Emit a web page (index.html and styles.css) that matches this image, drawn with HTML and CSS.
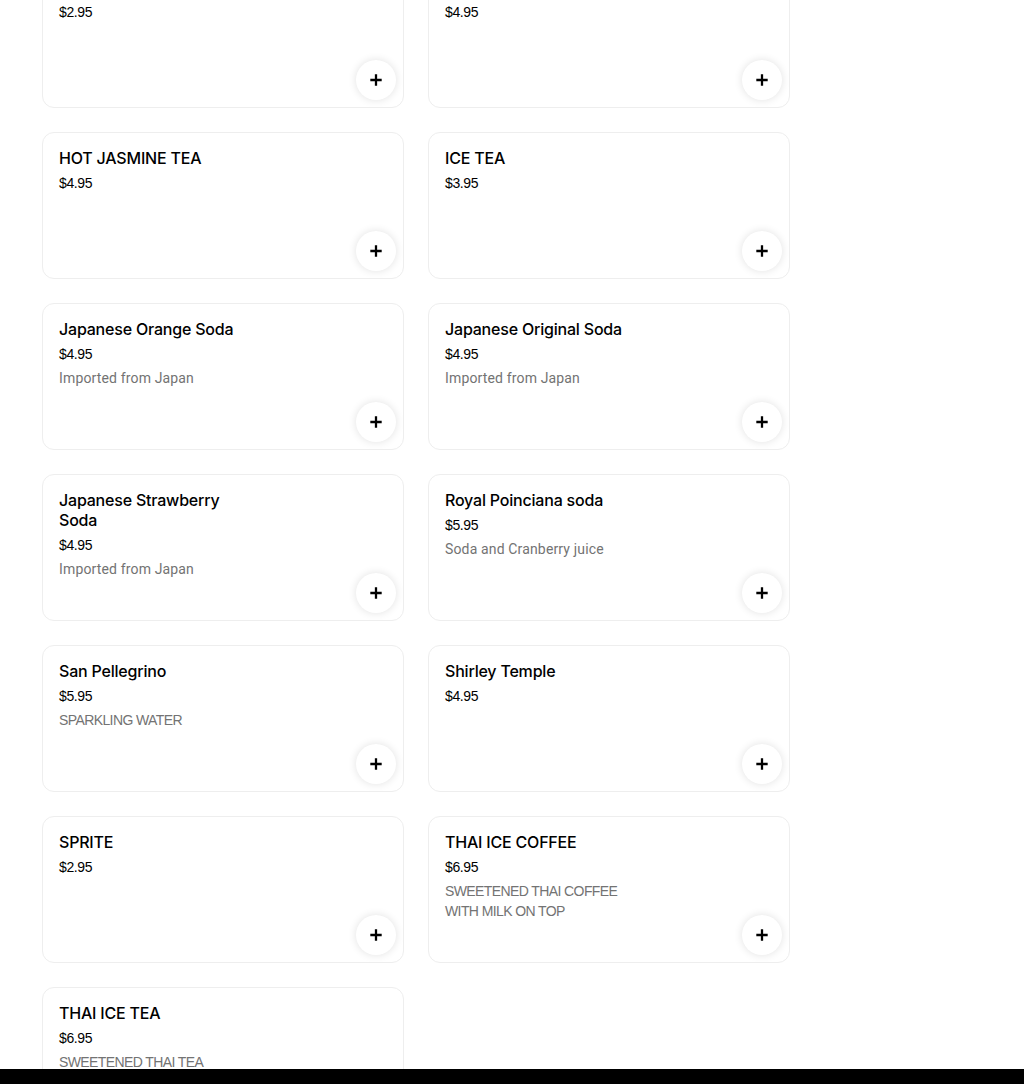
FILE: index.html
```html
<!DOCTYPE html>
<html>
<head>
<meta charset="utf-8">
<link rel="stylesheet" href="styles.css">
</head>
<body>
<main class="menu">
  <div class="grid">
    <div class="card"><div class="info"><div class="title">&nbsp;</div><div class="price">$2.95</div></div><button class="add"><svg viewBox="0 0 16 16" width="14" height="14"><path d="M8 1.5v13M1.5 8h13" stroke="#000" stroke-width="2.6"/></svg></button></div>
    <div class="card"><div class="info"><div class="title">&nbsp;</div><div class="price">$4.95</div></div><button class="add"><svg viewBox="0 0 16 16" width="14" height="14"><path d="M8 1.5v13M1.5 8h13" stroke="#000" stroke-width="2.6"/></svg></button></div>
    <div class="card"><div class="info"><div class="title">HOT JASMINE TEA</div><div class="price">$4.95</div></div><button class="add"><svg viewBox="0 0 16 16" width="14" height="14"><path d="M8 1.5v13M1.5 8h13" stroke="#000" stroke-width="2.6"/></svg></button></div>
    <div class="card"><div class="info"><div class="title">ICE TEA</div><div class="price">$3.95</div></div><button class="add"><svg viewBox="0 0 16 16" width="14" height="14"><path d="M8 1.5v13M1.5 8h13" stroke="#000" stroke-width="2.6"/></svg></button></div>
    <div class="card"><div class="info"><div class="title">Japanese Orange Soda</div><div class="price">$4.95</div><div class="desc">Imported from Japan</div></div><button class="add"><svg viewBox="0 0 16 16" width="14" height="14"><path d="M8 1.5v13M1.5 8h13" stroke="#000" stroke-width="2.6"/></svg></button></div>
    <div class="card"><div class="info"><div class="title">Japanese Original Soda</div><div class="price">$4.95</div><div class="desc">Imported from Japan</div></div><button class="add"><svg viewBox="0 0 16 16" width="14" height="14"><path d="M8 1.5v13M1.5 8h13" stroke="#000" stroke-width="2.6"/></svg></button></div>
    <div class="card"><div class="info"><div class="title">Japanese Strawberry Soda</div><div class="price">$4.95</div><div class="desc">Imported from Japan</div></div><button class="add"><svg viewBox="0 0 16 16" width="14" height="14"><path d="M8 1.5v13M1.5 8h13" stroke="#000" stroke-width="2.6"/></svg></button></div>
    <div class="card"><div class="info"><div class="title">Royal Poinciana soda</div><div class="price">$5.95</div><div class="desc">Soda and Cranberry juice</div></div><button class="add"><svg viewBox="0 0 16 16" width="14" height="14"><path d="M8 1.5v13M1.5 8h13" stroke="#000" stroke-width="2.6"/></svg></button></div>
    <div class="card"><div class="info"><div class="title">San Pellegrino</div><div class="price">$5.95</div><div class="desc caps">SPARKLING WATER</div></div><button class="add"><svg viewBox="0 0 16 16" width="14" height="14"><path d="M8 1.5v13M1.5 8h13" stroke="#000" stroke-width="2.6"/></svg></button></div>
    <div class="card"><div class="info"><div class="title">Shirley Temple</div><div class="price">$4.95</div></div><button class="add"><svg viewBox="0 0 16 16" width="14" height="14"><path d="M8 1.5v13M1.5 8h13" stroke="#000" stroke-width="2.6"/></svg></button></div>
    <div class="card"><div class="info"><div class="title">SPRITE</div><div class="price">$2.95</div></div><button class="add"><svg viewBox="0 0 16 16" width="14" height="14"><path d="M8 1.5v13M1.5 8h13" stroke="#000" stroke-width="2.6"/></svg></button></div>
    <div class="card"><div class="info"><div class="title">THAI ICE COFFEE</div><div class="price">$6.95</div><div class="desc caps">SWEETENED THAI COFFEE WITH MILK ON TOP</div></div><button class="add"><svg viewBox="0 0 16 16" width="14" height="14"><path d="M8 1.5v13M1.5 8h13" stroke="#000" stroke-width="2.6"/></svg></button></div>
    <div class="card"><div class="info"><div class="title">THAI ICE TEA</div><div class="price">$6.95</div><div class="desc caps">SWEETENED THAI TEA</div></div><button class="add"><svg viewBox="0 0 16 16" width="14" height="14"><path d="M8 1.5v13M1.5 8h13" stroke="#000" stroke-width="2.6"/></svg></button></div>
  </div>
</main>
<div class="bottom-bar"></div>
</body>
</html>
```
FILE: styles.css
```css
html, body {
  margin: 0;
  padding: 0;
  background: #fff;
  overflow: hidden;
}
body {
  font-family: Inter, "Liberation Sans", Arial, sans-serif;
  color: #000;
  height: 1084px;
}
.menu {
  padding-left: 42px;
  margin-top: -39px;
}
.grid {
  width: 748px;
  display: grid;
  grid-template-columns: 362px 362px;
  column-gap: 24px;
  row-gap: 24px;
}
.card {
  position: relative;
  box-sizing: border-box;
  height: 147px;
  border: 1px solid #eeeeee;
  border-radius: 12px;
  padding: 15px 16px 0 16px;
  background: #fff;
}
.info {
  max-width: 200px;
}
.title {
  font-size: 16px;
  line-height: 20px;
  font-weight: 500;
  letter-spacing: -0.2px;
  color: #000;
}
.price {
  margin-top: 5px;
  font-family: "Liberation Sans", Arial, sans-serif;
  font-size: 14px;
  line-height: 20px;
  letter-spacing: -0.4px;
  color: #000;
}
.desc {
  margin-top: 4px;
  font-family: Roboto, "Liberation Sans", Arial, sans-serif;
  font-size: 14px;
  line-height: 20px;
  color: #737373;
  letter-spacing: 0.15px;
}
.desc.caps {
  font-family: "Liberation Sans", Arial, sans-serif;
  letter-spacing: -0.6px;
}
.add {
  position: absolute;
  right: 7px;
  bottom: 7px;
  width: 40px;
  height: 40px;
  border-radius: 50%;
  border: none;
  background: #fff;
  box-shadow: 0 0 8px rgba(0,0,0,0.12);
  display: flex;
  align-items: center;
  justify-content: center;
  padding: 0;
}
.bottom-bar {
  position: fixed;
  left: 0;
  right: 0;
  bottom: 0;
  height: 15px;
  background: #000;
}
```
